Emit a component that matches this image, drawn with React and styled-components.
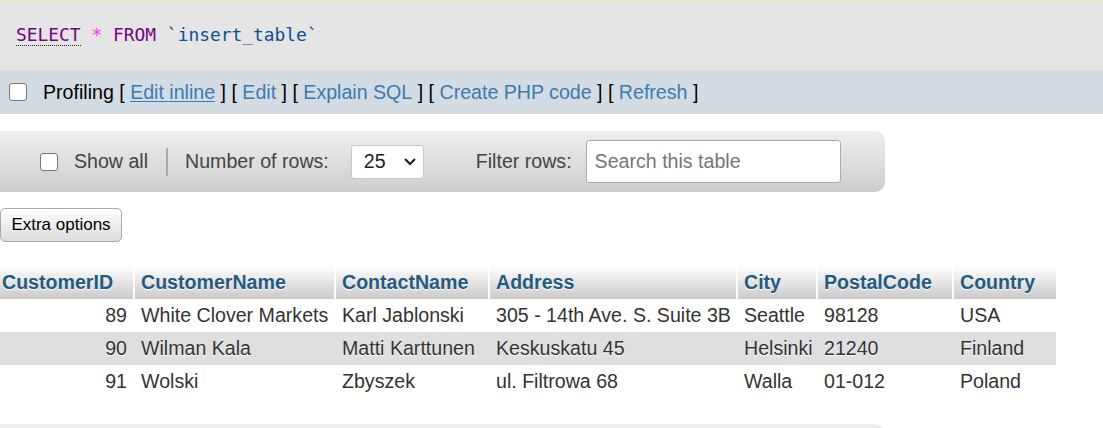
import React from 'react';
import styled, { createGlobalStyle } from 'styled-components';

const GlobalStyle = createGlobalStyle`
  html, body {
    margin: 0;
    padding: 0;
    overflow: hidden;
    background: #fff;
    font-family: "Liberation Sans", Arial, sans-serif;
    font-size: 19.6px;
    color: #444;
  }
`;

const Page = styled.div`
  display: flex;
  flex-direction: column;
  align-items: flex-start;
`;

const SqlBox = styled.div`
  align-self: stretch;
  box-sizing: border-box;
  height: 70px;
  border-top: 1px solid #e6f3a2;
  background: #e5e5e5;
  padding: 22px 16px 0;
  font-family: "DejaVu Sans Mono", "Liberation Mono", monospace;
  font-size: 17.9px;
  line-height: 24px;
  white-space: pre;
`;

const Keyword = styled.span`
  color: #770088;
  border-bottom: ${(p) => (p.$doc ? '1px dotted #222' : 'none')};
`;

const Operator = styled.span`
  color: #ff33ff;
`;

const Ident = styled.span`
  color: #0b4f95;
`;

const ProfilingBar = styled.div`
  align-self: stretch;
  height: 44px;
  background: #d3dce3;
  display: flex;
  align-items: center;
  padding-left: 9px;
  color: #000;
  white-space: pre;
`;

const Check = styled.span`
  display: inline-block;
  box-sizing: border-box;
  width: 18px;
  height: 18px;
  border: 1.5px solid #767676;
  border-radius: 3px;
  background: #fff;
  margin-right: ${(p) => p.$gap || 16}px;
  flex: none;
`;

const Link = styled.a`
  color: #3a7bb0;
  text-decoration: ${(p) => (p.$underline ? 'underline' : 'none')};
  text-underline-offset: 2px;
  cursor: pointer;
`;

const NavBar = styled.div`
  box-sizing: border-box;
  width: 885px;
  height: 61px;
  margin-top: ${(p) => p.$top}px;
  border-radius: 0 10px 10px 0;
  background: linear-gradient(#efefef, #cdcdcd);
  display: flex;
  align-items: center;
  padding-left: 40px;
  color: #444;
`;

const NavLabel = styled.span`
  margin-right: ${(p) => p.$gap}px;
  white-space: nowrap;
`;

const Separator = styled.span`
  width: 2px;
  height: 28px;
  background: #a8a8a8;
  margin-right: 17px;
`;

const Select = styled.div`
  box-sizing: border-box;
  width: 73px;
  height: 34px;
  border: 1px solid #c8c8c8;
  border-radius: 3px;
  background: #fff;
  display: flex;
  align-items: center;
  justify-content: space-between;
  padding: 0 6px 0 12px;
  margin-right: 52px;
  color: #222;
`;

const SearchInput = styled.input`
  box-sizing: border-box;
  width: 255px;
  height: 43px;
  border: 1px solid #aaa;
  border-radius: 3px;
  background: #fff;
  padding: 0 8px;
  font: inherit;
  color: #444;
  &::placeholder {
    color: #767676;
  }
`;

const Button = styled.button`
  box-sizing: border-box;
  height: 34px;
  width: 122px;
  margin-top: 16px;
  border: 1px solid #aaa;
  border-radius: 5px;
  background: linear-gradient(#fff, #dcdcdc);
  font-family: "Liberation Sans", Arial, sans-serif;
  font-size: 17px;
  color: #000;
  padding: 0;
`;

const Table = styled.table`
  margin-top: 23px;
  width: 1056px;
  table-layout: fixed;
  border-collapse: separate;
  border-spacing: 0;
`;

const Th = styled.th`
  box-sizing: border-box;
  height: 34px;
  padding: 0 0 0 ${(p) => (p.$first ? 2 : 6)}px;
  text-align: left;
  font-weight: bold;
  color: #235a81;
  text-shadow: 0 1px 0 #fff;
  background: linear-gradient(#fff, #cbcbcb);
  border-right: ${(p) => (p.$last ? 'none' : '2px solid #fff')};
  white-space: nowrap;
  overflow: hidden;
`;

const Tr = styled.tr`
  background: ${(p) => (p.$odd ? '#dfdfdf' : '#fff')};
`;

const Td = styled.td`
  height: 33px;
  padding: 0 ${(p) => (p.$num ? 8 : 0)}px 0 ${(p) => (p.$num ? 0 : 6)}px;
  text-align: ${(p) => (p.$num ? 'right' : 'left')};
  color: #333;
  text-shadow: 0 1px 0 #fff;
  white-space: nowrap;
  overflow: hidden;
`;

const columns = [
  { name: 'CustomerID', width: 135 },
  { name: 'CustomerName', width: 201 },
  { name: 'ContactName', width: 154 },
  { name: 'Address', width: 248 },
  { name: 'City', width: 80 },
  { name: 'PostalCode', width: 136 },
  { name: 'Country', width: 102 },
];

const rows = [
  ['89', 'White Clover Markets', 'Karl Jablonski', '305 - 14th Ave. S. Suite 3B', 'Seattle', '98128', 'USA'],
  ['90', 'Wilman Kala', 'Matti Karttunen', 'Keskuskatu 45', 'Helsinki', '21240', 'Finland'],
  ['91', 'Wolski', 'Zbyszek', 'ul. Filtrowa 68', 'Walla', '01-012', 'Poland'],
];

const Chevron = () => (
  <svg width="14" height="9" viewBox="0 0 14 9">
    <polyline points="2,2 7,7 12,2" fill="none" stroke="#222" strokeWidth="2.2" />
  </svg>
);

const App = () => {
  return (
    <Page>
      <GlobalStyle />
      <SqlBox>
        <Keyword $doc>SELECT</Keyword> <Operator>*</Operator> <Keyword>FROM</Keyword>{' '}
        <Ident>`insert_table`</Ident>
      </SqlBox>
      <ProfilingBar>
        <Check $gap={16} />
        Profiling [ <Link $underline>Edit inline</Link> ] [ <Link>Edit</Link> ] [{' '}
        <Link>Explain SQL</Link> ] [ <Link>Create PHP code</Link> ] [ <Link>Refresh</Link> ]
      </ProfilingBar>
      <NavBar $top={17}>
        <Check $gap={16} />
        <NavLabel $gap={18}>Show all</NavLabel>
        <Separator />
        <NavLabel $gap={22}>Number of rows:</NavLabel>
        <Select>
          <span>25</span>
          <Chevron />
        </Select>
        <NavLabel $gap={14}>Filter rows:</NavLabel>
        <SearchInput placeholder="Search this table" />
      </NavBar>
      <Button>Extra options</Button>
      <Table>
        <colgroup>
          {columns.map((c) => (
            <col key={c.name} style={{ width: c.width }} />
          ))}
        </colgroup>
        <thead>
          <tr>
            {columns.map((c, i) => (
              <Th key={c.name} $first={i === 0} $last={i === columns.length - 1}>
                {c.name}
              </Th>
            ))}
          </tr>
        </thead>
        <tbody>
          {rows.map((r, ri) => (
            <Tr key={r[0]} $odd={ri % 2 === 1}>
              {r.map((cell, ci) => (
                <Td key={ci} $num={ci === 0}>
                  {cell}
                </Td>
              ))}
            </Tr>
          ))}
        </tbody>
      </Table>
      {/* lower navigation bar, only its top edge fits in the window */}
      <NavBar $top={26} />
    </Page>
  );
};

export default App;
